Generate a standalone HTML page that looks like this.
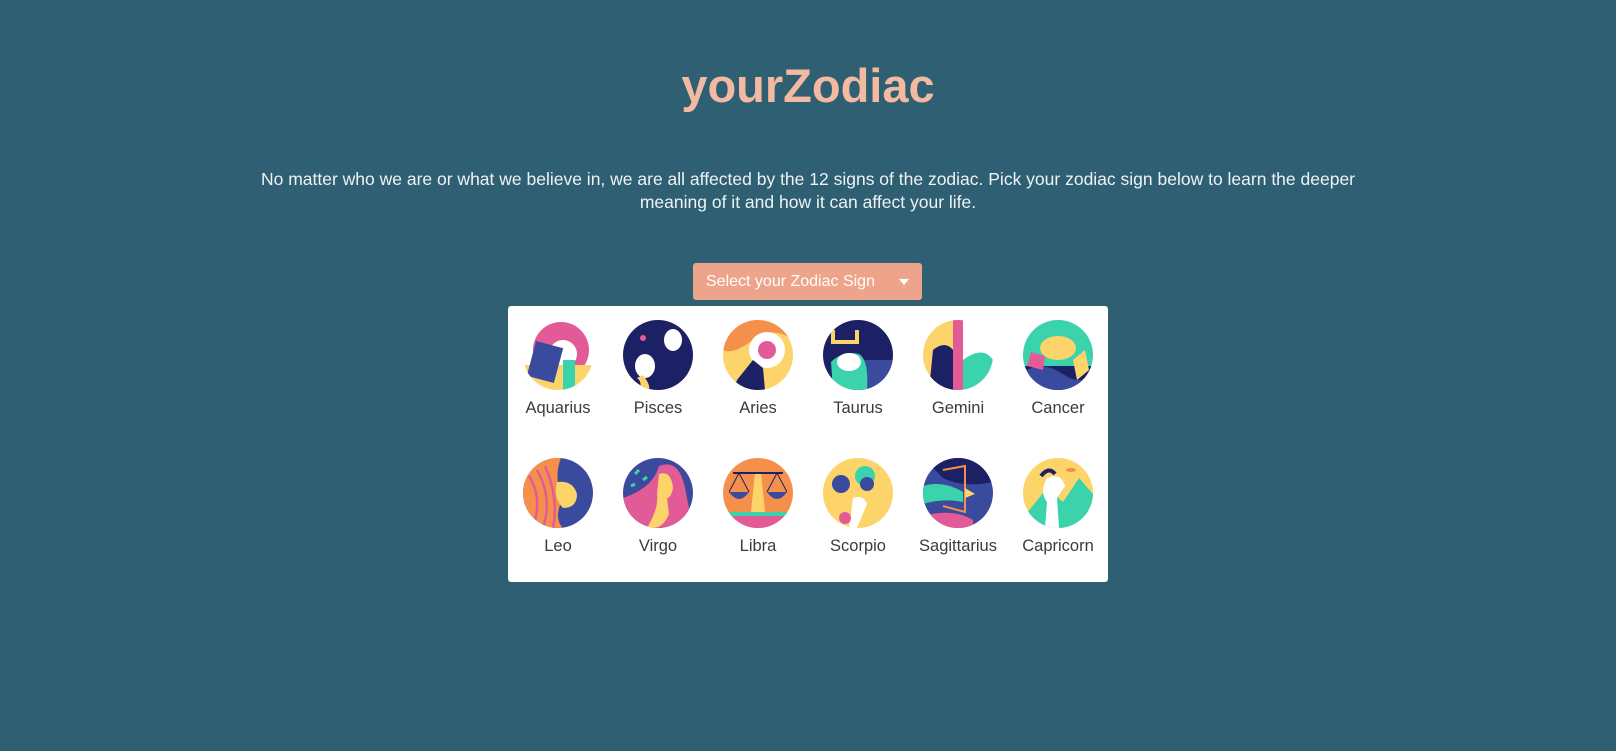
<!DOCTYPE html>
<html><head><meta charset="utf-8"><style>
html,body{margin:0;padding:0}
body{width:1616px;height:751px;background:#2e5f72;font-family:"Liberation Sans",sans-serif;position:relative;overflow:hidden}
h1{position:absolute;left:0;width:1616px;top:58px;margin:0;text-align:center;font-size:47px;font-weight:bold;color:#f3b9a1;letter-spacing:0px}
p{position:absolute;left:238px;width:1140px;top:168px;margin:0;text-align:center;color:#eef3f4;font-size:17.5px;line-height:23px}
.btn{position:absolute;left:693px;top:263px;width:229px;height:37px;background:#eda48a;border-radius:3px;color:#fff;font-size:16px;line-height:37px;box-sizing:border-box;padding-left:13px}
.btn:after{content:"";position:absolute;right:13px;top:16px;border:5px solid transparent;border-top:6px solid #fff;border-bottom:0}
.panel{position:absolute;left:508px;top:306px;width:600px;height:276px;background:#fff;border-radius:3px}
.it{position:absolute;width:100px;text-align:center;color:#3b3b3b;font-size:16.5px}
.it svg{display:block;margin:0 auto}
.it span{display:block;margin-top:9px}
</style></head><body>
<h1>yourZodiac</h1>
<p>No matter who we are or what we believe in, we are all affected by the 12 signs of the zodiac. Pick your zodiac sign below to learn the deeper meaning of it and how it can affect your life.</p>
<div class="btn">Select your Zodiac Sign</div>
<div class="panel">
<svg width="0" height="0" style="position:absolute"><defs><clipPath id="c"><circle cx="35" cy="35" r="35"/></clipPath></defs></svg>

<div class="it" style="left:0;top:14px"><svg width="70" height="70"><g clip-path="url(#c)"><rect width="70" height="70" fill="#fff"/><circle cx="38" cy="30" r="28" fill="#e25b97"/><circle cx="40" cy="34" r="14" fill="#fff"/><rect x="0" y="45" width="70" height="25" fill="#fcd46a"/><rect x="8" y="24" width="28" height="36" fill="#3a4a9c" transform="rotate(15 22 42)"/><rect x="40" y="40" width="12" height="30" fill="#3bd3ab"/></g></svg><span>Aquarius</span></div>
<div class="it" style="left:100px;top:14px"><svg width="70" height="70"><g clip-path="url(#c)"><rect width="70" height="70" fill="#1c2064"/><ellipse cx="50" cy="20" rx="9" ry="11" fill="#fff"/><ellipse cx="22" cy="46" rx="10" ry="12" fill="#fff"/><path d="M20 55 Q30 68 24 72 L16 72 Q20 62 14 58Z" fill="#fcd46a"/><circle cx="20" cy="18" r="3" fill="#e25b97"/></g></svg><span>Pisces</span></div>
<div class="it" style="left:200px;top:14px"><svg width="70" height="70"><g clip-path="url(#c)"><rect width="70" height="70" fill="#fcd46a"/><path d="M0 0H70V20Q50 5 30 20Q10 35 0 30Z" fill="#f4904b"/><circle cx="44" cy="30" r="18" fill="#fff"/><circle cx="44" cy="30" r="9" fill="#e25b97"/><path d="M14 60 L30 40 L40 48 L42 70 L10 70Z" fill="#1c2064"/></g></svg><span>Aries</span></div>
<div class="it" style="left:300px;top:14px"><svg width="70" height="70"><g clip-path="url(#c)"><rect width="70" height="70" fill="#1c2064"/><rect x="40" y="40" width="30" height="30" fill="#3a4a9c"/><path d="M8 42 Q20 30 36 34 Q46 40 44 70 L10 70Z" fill="#3bd3ab"/><ellipse cx="26" cy="42" rx="12" ry="9" fill="#fff"/><path d="M10 10V22H34V10" stroke="#fcd46a" stroke-width="4" fill="none"/></g></svg><span>Taurus</span></div>
<div class="it" style="left:400px;top:14px"><svg width="70" height="70"><g clip-path="url(#c)"><rect width="70" height="70" fill="#fff"/><rect width="34" height="70" fill="#fcd46a"/><path d="M10 30 Q22 20 30 30 L32 70 L6 70Z" fill="#1c2064"/><rect x="30" y="0" width="10" height="70" fill="#e25b97"/><path d="M40 40 Q60 25 70 40 V70 H40Z" fill="#3bd3ab"/></g></svg><span>Gemini</span></div>
<div class="it" style="left:500px;top:14px"><svg width="70" height="70"><g clip-path="url(#c)"><rect width="70" height="70" fill="#3bd3ab"/><ellipse cx="35" cy="28" rx="18" ry="12" fill="#fcd46a"/><rect x="0" y="46" width="70" height="24" fill="#1c2064"/><path d="M0 52 Q20 40 40 54 T70 50 V70H0Z" fill="#3a4a9c"/><path d="M8 32 L22 36 L20 50 L4 46Z" fill="#e25b97"/><path d="M50 40 L62 30 L66 50 L54 60Z" fill="#fcd46a"/></g></svg><span>Cancer</span></div>

<div class="it" style="left:0;top:152px"><svg width="70" height="70"><g clip-path="url(#c)"><rect width="70" height="70" fill="#3a4a9c"/><path d="M0 0 H38 Q30 20 40 40 Q30 60 40 70 H0Z" fill="#f4904b"/><path d="M6 18 Q20 40 10 70 M14 12 Q30 40 20 70 M22 8 Q36 40 30 70" stroke="#e25b97" stroke-width="2.5" fill="none"/><path d="M34 24 Q50 22 54 36 Q54 50 40 50 Q30 40 34 24Z" fill="#fcd46a"/></g></svg><span>Leo</span></div>
<div class="it" style="left:100px;top:152px"><svg width="70" height="70"><g clip-path="url(#c)"><rect width="70" height="70" fill="#3a4a9c"/><path d="M0 40 Q30 30 36 8 Q56 0 62 30 L70 70 H0Z" fill="#e25b97"/><path d="M36 16 Q48 12 50 30 Q48 40 44 40 L46 56 Q40 70 30 70 L24 70 Q36 50 34 36Z" fill="#fcd46a"/><path d="M12 16 l4 -4 M20 22 l4 -3 M8 28 l4 -2" stroke="#3bd3ab" stroke-width="3"/></g></svg><span>Virgo</span></div>
<div class="it" style="left:200px;top:152px"><svg width="70" height="70"><g clip-path="url(#c)"><rect width="70" height="70" fill="#f4904b"/><rect x="0" y="58" width="70" height="12" fill="#e25b97"/><rect x="0" y="54" width="70" height="4" fill="#3bd3ab"/><path d="M32 14 h6 l4 40 h-14z" fill="#fcd46a"/><path d="M10 15 H60" stroke="#1c2064" stroke-width="2"/><path d="M6 34 Q16 48 26 34Z M44 34 Q54 48 64 34Z" fill="#3a4a9c"/><path d="M16 15 L6 34 M16 15 L26 34 M54 15 L44 34 M54 15 L64 34" stroke="#1c2064" stroke-width="1"/></g></svg><span>Libra</span></div>
<div class="it" style="left:300px;top:152px"><svg width="70" height="70"><g clip-path="url(#c)"><rect width="70" height="70" fill="#fcd46a"/><circle cx="18" cy="26" r="9" fill="#3a4a9c"/><circle cx="42" cy="18" r="10" fill="#3bd3ab"/><circle cx="44" cy="26" r="7" fill="#3a4a9c"/><path d="M30 40 Q40 36 44 46 L34 70 H26Z" fill="#fff"/><circle cx="22" cy="60" r="6" fill="#e25b97"/></g></svg><span>Scorpio</span></div>
<div class="it" style="left:400px;top:152px"><svg width="70" height="70"><g clip-path="url(#c)"><rect width="70" height="70" fill="#3a4a9c"/><path d="M0 0 H70 V24 Q40 30 20 20 Z" fill="#1c2064"/><path d="M0 28 Q20 22 40 34 L40 44 Q20 40 0 46Z" fill="#3bd3ab"/><path d="M0 58 Q30 50 50 62 L50 70 H0Z" fill="#e25b97"/><path d="M20 12 L42 8 L42 54 L20 48" stroke="#f4904b" stroke-width="2" fill="none"/><path d="M42 30 L52 36 L42 40Z" fill="#fcd46a"/></g></svg><span>Sagittarius</span></div>
<div class="it" style="left:500px;top:152px"><svg width="70" height="70"><g clip-path="url(#c)"><rect width="70" height="70" fill="#fcd46a"/><path d="M0 60 L24 30 L40 44 L56 20 L70 36 V70 H0Z" fill="#3bd3ab"/><path d="M24 20 Q38 14 42 28 L34 40 L36 70 H22 L24 44 Q16 34 24 20Z" fill="#fff"/><path d="M18 18 Q26 8 32 16" stroke="#1c2064" stroke-width="4" fill="none"/><ellipse cx="48" cy="12" rx="5" ry="2" fill="#f4904b"/></g></svg><span>Capricorn</span></div>
</div>
</body></html>
